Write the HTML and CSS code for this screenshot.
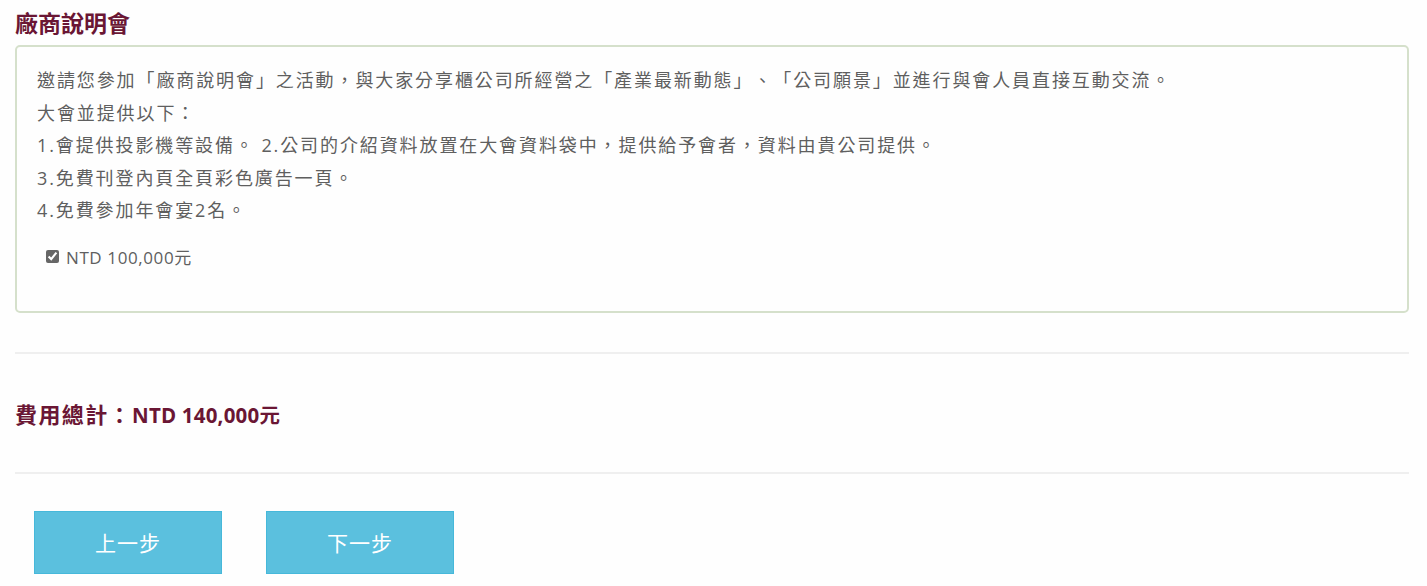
FILE: index.html
```html
<!DOCTYPE html>
<html lang="zh-Hant">

<head>
    <meta charset="UTF-8">
    <meta name="viewport" content="width=device-width, initial-scale=1.0">
    <title>廠商說明會</title>
    <link rel="stylesheet" href="styles.css">
</head>

<body>
    <div class="page">
        <h3 class="section-title">廠商說明會</h3>
        <div class="info-box">
            <p>邀請您參加「廠商說明會」之活動，與大家分享櫃公司所經營之「產業最新動態」、「公司願景」並進行與會人員直接互動交流。</p>
            <p>大會並提供以下：</p>
            <p>1.會提供投影機等設備。 2.公司的介紹資料放置在大會資料袋中，提供給予會者，資料由貴公司提供。</p>
            <p>3.免費刊登內頁全頁彩色廣告一頁。</p>
            <p>4.免費參加年會宴2名。</p>
            <label class="option">
                <input type="checkbox" checked>
                <span>NTD 100,000元</span>
            </label>
        </div>

        <hr class="divider">

        <h3 class="total"><span class="total-label">費用總計：</span>NTD 140,000元</h3>

        <hr class="divider">

        <div class="actions">
            <button class="btn">上一步</button>
            <button class="btn">下一步</button>
        </div>
    </div>
</body>

</html>
```

FILE: styles.css
```css
* {
    margin: 0;
    padding: 0;
    box-sizing: border-box;
}

body {
    background-color: #fefefe;
    font-family: "Open Sans", "Noto Sans CJK TC", sans-serif;
    color: #5f5f5f;
    text-spacing-trim: space-all;
}

.page {
    padding: 0 18px 0 15px;
}

.section-title {
    margin-top: 8px;
    margin-bottom: 7px;
    font-size: 23px;
    line-height: 30px;
    font-weight: bold;
    color: #6a1634;
}

.info-box {
    border: 2px solid #d5e0cb;
    border-radius: 5px;
    padding: 17px 20px 42px 20px;
}

.info-box p {
    font-size: 18px;
    line-height: 32.5px;
    letter-spacing: 1.9px;
}

.option {
    display: flex;
    align-items: center;
    gap: 7px;
    margin-top: 18px;
    margin-left: 9px;
    height: 24px;
    font-size: 17px;
    letter-spacing: 0.6px;
}

.option input {
    width: 13px;
    height: 13px;
    accent-color: #666;
}

.divider {
    border: 0;
    border-top: 2px solid #efefef;
    margin-top: 39px;
}

.total {
    margin-top: 46px;
    margin-bottom: 43px;
    font-size: 20.5px;
    line-height: 28px;
    font-weight: bold;
    letter-spacing: 0.2px;
    color: #6a1634;
}

.total-label {
    font-size: 22px;
    letter-spacing: 1.4px;
}

.actions {
    display: flex;
    gap: 44px;
    padding-left: 19px;
    margin-top: 37px;
}

.btn {
    width: 188px;
    height: 63px;
    background-color: #5bc0de;
    border: 1px solid #46b8da;
    color: #fff;
    font-family: "Noto Sans CJK TC", sans-serif;
    font-size: 21px;
    letter-spacing: 1px;
    cursor: pointer;
}
```
